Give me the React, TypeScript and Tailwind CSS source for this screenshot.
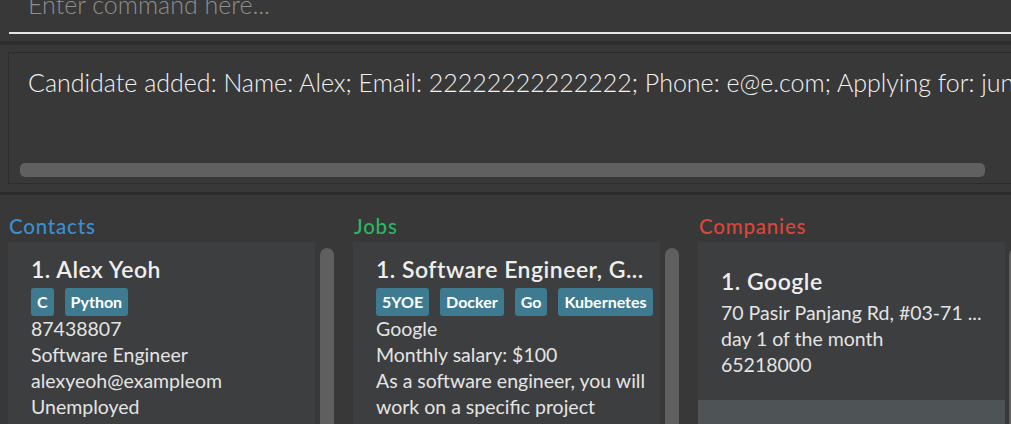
const Tag = ({ t }: { t: string }) => (
  <span className="h-[28px] leading-[28px] px-[6px] rounded-[3px] bg-[#3e7b91] text-white text-[16px] font-bold">
    {t}
  </span>
);

const Line = ({ children }: { children: React.ReactNode }) => (
  <div className="text-[19.5px] leading-[26px] text-[#e4e4e4]">{children}</div>
);

const Thumb = () => <div className="w-[14px] mt-[6px] h-[300px] rounded-full bg-[#5f5f5f] shrink-0" />;

const Header = ({ t, c }: { t: string; c: string }) => (
  <div className={`pl-[1px] pt-[19px] text-[20.5px] leading-[24px] font-medium tracking-[0.8px] ${c}`}>{t}</div>
);

export default function App() {
  return (
    <div className="w-[1011px] h-[424px] overflow-hidden bg-[#383838] flex flex-col [font-family:Lato,'Open_Sans',sans-serif]">
      {/* command box */}
      <div className="h-[45px] shrink-0 border-b-[4px] border-[#2e2e2e] pl-[9px]">
        <div className="h-[34px] border-b-2 border-[#e6e6e6] overflow-hidden">
          <div className="mt-[-9px] pl-[19px] text-[25px] leading-[26px] font-light text-[#8e8e8e] whitespace-nowrap">
            Enter command here...
          </div>
        </div>
      </div>

      {/* result display */}
      <div className="shrink-0 pt-[7px] pb-[8px] pl-[8px] border-b-[3px] border-[#2b2b2b]">
        <div className="h-[132px] w-[1020px] border border-[#2c2c2c] flex flex-col">
          <div className="pl-[19px] pt-[12px] text-[25px] leading-[34px] font-light text-[#f2f2f2] whitespace-nowrap overflow-hidden">
            Candidate added: Name: Alex; Email: 22222222222222; Phone: e@e.com; Applying for: junior
          </div>
          <div className="mt-auto mb-[6px] ml-[11px] w-[965px] h-[14px] rounded-[5px] bg-[#606060]" />
        </div>
      </div>

      {/* lists */}
      <div className="flex-1 min-h-0 grid grid-cols-[345px_345px_321px]">
        {/* Contacts */}
        <div className="pl-[8px] flex flex-col min-h-0">
          <Header t="Contacts" c="text-[#3a8fd3]" />
          <div className="flex gap-[5px] mt-[4px]">
            <div className="w-[307px] shrink-0 bg-[#3c3e3f] pl-[23px] pr-[10px] pt-[13px] pb-[10px]">
              <div className="text-[23px] leading-[28px] font-semibold tracking-[0.5px] text-[#eeeeee] whitespace-nowrap">1. Alex Yeoh</div>
              <div className="flex gap-[11px] mt-[5px]">
                <Tag t="C" />
                <Tag t="Python" />
              </div>
              <Line>87438807</Line>
              <Line>Software Engineer</Line>
              <Line>alexyeoh@exampleom</Line>
              <Line>Unemployed</Line>
            </div>
            <Thumb />
          </div>
        </div>

        {/* Jobs */}
        <div className="pl-[8px] flex flex-col min-h-0">
          <Header t="Jobs" c="text-[#2db464]" />
          <div className="flex gap-[5px] mt-[4px]">
            <div className="w-[307px] shrink-0 bg-[#3c3e3f] pl-[23px] pr-[10px] pt-[13px] pb-[10px]">
              <div className="text-[23px] leading-[28px] font-semibold tracking-[0.5px] text-[#eeeeee] whitespace-nowrap">1. Software Engineer, G...</div>
              <div className="flex gap-[11px] mt-[5px]">
                <Tag t="5YOE" />
                <Tag t="Docker" />
                <Tag t="Go" />
                <Tag t="Kubernetes" />
              </div>
              <Line>Google</Line>
              <Line>Monthly salary: $100</Line>
              <Line>As a software engineer, you will work on a specific project</Line>
            </div>
            <Thumb />
          </div>
        </div>

        {/* Companies */}
        <div className="pl-[8px] flex flex-col min-h-0">
          <Header t="Companies" c="text-[#d9473a]" />
          <div className="flex gap-[4px] mt-[4px]">
            <div className="w-[307px] shrink-0 flex flex-col">
              <div className="h-[158px] bg-[#3c3e3f] pl-[23px] pr-[10px] pt-[25px]">
                <div className="text-[23px] leading-[28px] font-semibold tracking-[0.5px] text-[#eeeeee] whitespace-nowrap">1. Google</div>
                <div className="mt-[5px]">
                  <Line>70 Pasir Panjang Rd, #03-71 ...</Line>
                  <Line>day 1 of the month</Line>
                  <Line>65218000</Line>
                </div>
              </div>
              <div className="h-[100px] bg-[#4e5355]" />
            </div>
            <Thumb />
          </div>
        </div>
      </div>
    </div>
  );
}
